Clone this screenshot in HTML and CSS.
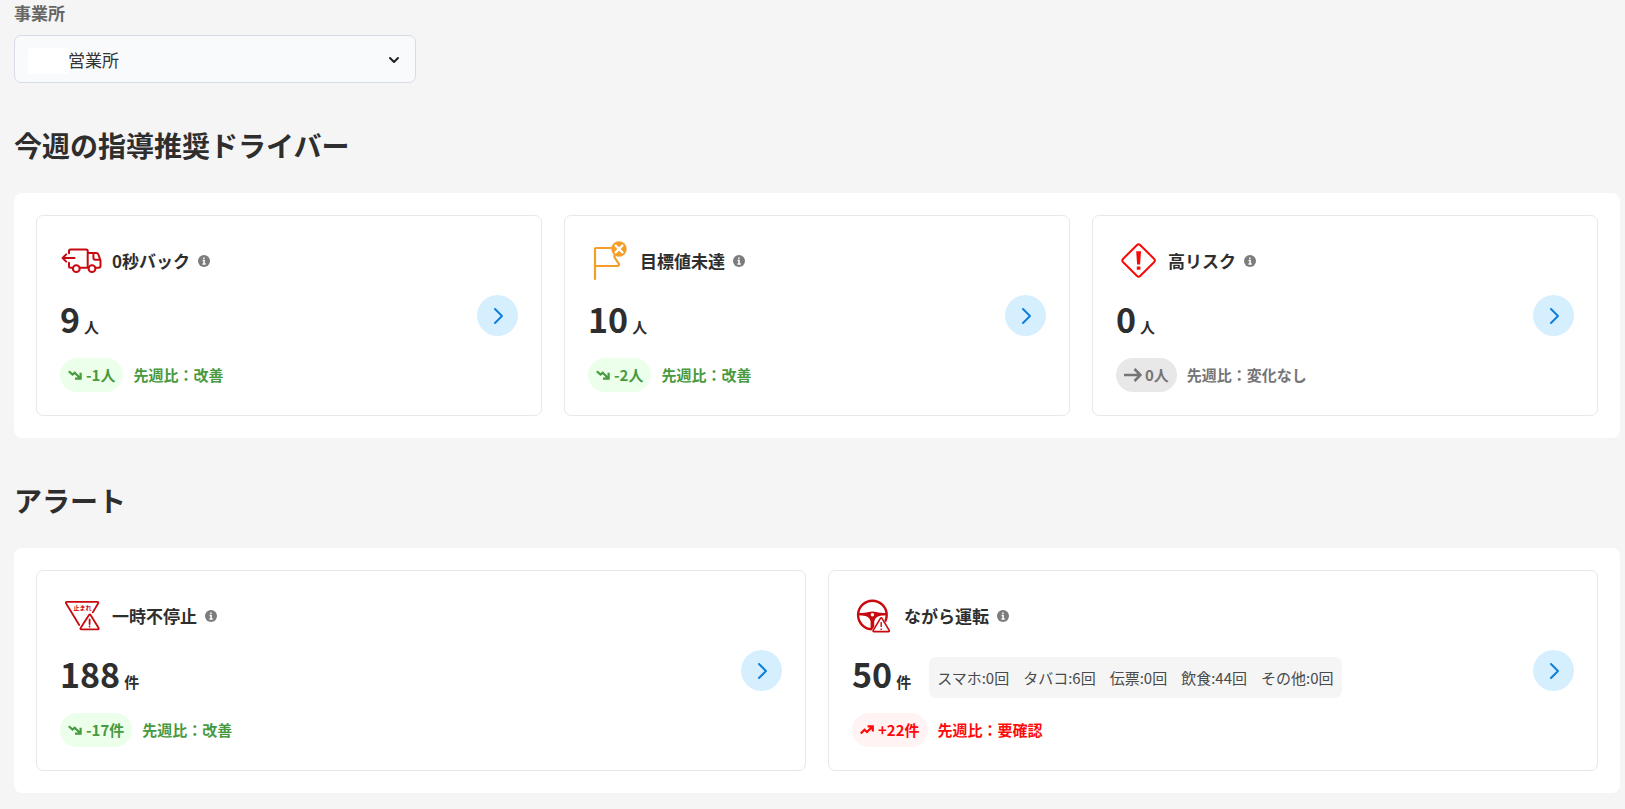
FILE: index.html
```html
<!DOCTYPE html>
<html lang="ja">
<head>
<meta charset="utf-8">
<title>今週の指導推奨ドライバー</title>
<link rel="stylesheet" href="styles.css">
</head>
<body>
<svg class="defs" aria-hidden="true">
  <symbol id="info" viewBox="0 0 12 12"><circle cx="6" cy="6" r="6" fill="#7c7c7c"/><path d="M5.900 2.400v1.700M4.600 5.400h1.500v3.700M4.500 9.100h3.200" fill="none" stroke="#fff" stroke-width="1.500"/></symbol>
  <symbol id="chevron" viewBox="0 0 18 18"><path d="M6 2l7 7-7 7" fill="none" stroke="#0e7fd8" stroke-width="2" stroke-linecap="round" stroke-linejoin="round"/></symbol>
  <symbol id="down" viewBox="0 0 14 10"><path d="M.8 1.200l3.700 3.400 2.200-1.900 5.100 5M12.600 2.800v5.800H7" fill="none" stroke="currentColor" stroke-width="2.200"/></symbol>
  <symbol id="up" viewBox="0 0 14 10"><path d="M.8 8.600l3.700-3.800 2.400 2.300 5.200-5M7.600 1.400h5.200v5.200" fill="none" stroke="currentColor" stroke-width="2.200"/></symbol>
  <symbol id="flat" viewBox="0 0 18 14"><path d="M0 7h16.500M10.500 1l6 6-6 6" fill="none" stroke="currentColor" stroke-width="2.600"/></symbol>
</svg>
<main class="page">
  <div class="field">
    <label class="field-label" for="office">事業所</label>
    <div class="select-wrap">
      <select class="select" id="office"><option>営業所</option></select>
      <span class="mask"></span>
      <svg class="caret" viewBox="0 0 12 8"><path d="M2 2l4 4 4-4" fill="none" stroke="#222" stroke-width="2" stroke-linecap="round" stroke-linejoin="round"/></svg>
    </div>
  </div>

  <section>
    <h2 class="heading">今週の指導推奨ドライバー</h2>
    <div class="panel three">
      <article class="card">
        <div class="body">
          <div class="title-row">
            <svg class="icon" viewBox="0 0 42 42" fill="none" stroke="#c80a10" stroke-width="2" stroke-linecap="round" stroke-linejoin="round"><path d="M14.500 18H2.600M6.200 14.400L2.600 18l3.600 3.600M9 13.200V11q0-1.500 1.500-1.500h15.600q1.600 0 1.600 1.600v16.600M9 22.800v3.400q0 1.500 1.500 1.500h2M20 27.700h8.400M27.700 13h8.400q1.800 0 2.400 1.800l2 5.700v5.200q0 2-2 2h-2.700M33.400 13.400v4.300q0 2 2 2h4.300"/><circle cx="16.300" cy="28.700" r="3.400"/><circle cx="32" cy="28.700" r="3.400"/></svg>
            <h3 class="title">0秒バック</h3>
            <button class="info" aria-label="説明"><svg viewBox="0 0 12 12"><use href="#info"/></svg></button>
          </div>
          <div class="count-row"><p class="count"><span class="num">9</span><span class="unit">人</span></p></div>
          <div class="trend good"><span class="badge"><svg class="t-icon" viewBox="0 0 14 10"><use href="#down"/></svg>-1人</span><span>先週比：改善</span></div>
        </div>
        <button class="go" aria-label="詳細"><svg class="go-icon" viewBox="0 0 18 18"><use href="#chevron"/></svg></button>
      </article>

      <article class="card">
        <div class="body">
          <div class="title-row">
            <svg class="icon" viewBox="0 0 42 42" fill="none" stroke="#f59d29" stroke-width="2.200" stroke-linecap="round" stroke-linejoin="round"><path d="M7 39V9q0-1 1-1h15M26.300 16l.6 2 3.800 5.600q1 2.400-2.200 2.400H7"/><circle cx="31" cy="9" r="7.700" fill="#f59d29" stroke="none"/><path d="M27.600 5.600l6.800 6.800M34.400 5.600l-6.800 6.800" stroke="#fff"/></svg>
            <h3 class="title">目標値未達</h3>
            <button class="info" aria-label="説明"><svg viewBox="0 0 12 12"><use href="#info"/></svg></button>
          </div>
          <div class="count-row"><p class="count"><span class="num">10</span><span class="unit">人</span></p></div>
          <div class="trend good"><span class="badge"><svg class="t-icon" viewBox="0 0 14 10"><use href="#down"/></svg>-2人</span><span>先週比：改善</span></div>
        </div>
        <button class="go" aria-label="詳細"><svg class="go-icon" viewBox="0 0 18 18"><use href="#chevron"/></svg></button>
      </article>

      <article class="card">
        <div class="body">
          <div class="title-row">
            <svg class="icon" viewBox="0 0 42 42"><path d="M20.800 5.200q1.800-1.800 3.600 0L38 18.700q1.800 1.800 0 3.600L24.400 35.800q-1.800 1.800-3.600 0L7.200 22.300q-1.800-1.800 0-3.600z" fill="none" stroke="#fb0808" stroke-width="2"/><path d="M20.200 11.200h4.800l-.9 13.400h-3zM20.800 26.600h3.600v3.200h-3.600z" fill="#fb0808"/></svg>
            <h3 class="title">高リスク</h3>
            <button class="info" aria-label="説明"><svg viewBox="0 0 12 12"><use href="#info"/></svg></button>
          </div>
          <div class="count-row"><p class="count"><span class="num">0</span><span class="unit">人</span></p></div>
          <div class="trend flat"><span class="badge"><svg class="t-icon wide" viewBox="0 0 18 14"><use href="#flat"/></svg>0人</span><span>先週比：変化なし</span></div>
        </div>
        <button class="go" aria-label="詳細"><svg class="go-icon" viewBox="0 0 18 18"><use href="#chevron"/></svg></button>
      </article>
    </div>
  </section>

  <section>
    <h2 class="heading">アラート</h2>
    <div class="panel two">
      <article class="card">
        <div class="body">
          <div class="title-row">
            <svg class="icon" viewBox="0 0 42 42" fill="none" stroke="#c80a10" stroke-width="1.800" stroke-linecap="round" stroke-linejoin="round"><path d="M19.200 30L6 8.200q-.6-1.400.8-1.400h30.600q1.400 0 .8 1.400L32.800 17.400M29 20q.8-1.200 1.600 0l8 13q.6 1.400-.8 1.400H21.400q-1.400 0-.8-1.400zM29.600 24.500v4.600M29.600 31.400v.2"/><text class="sign" x="22.400" y="15" text-anchor="middle">止まれ</text></svg>
            <h3 class="title">一時不停止</h3>
            <button class="info" aria-label="説明"><svg viewBox="0 0 12 12"><use href="#info"/></svg></button>
          </div>
          <div class="count-row"><p class="count"><span class="num">188</span><span class="unit">件</span></p></div>
          <div class="trend good"><span class="badge"><svg class="t-icon" viewBox="0 0 14 10"><use href="#down"/></svg>-17件</span><span>先週比：改善</span></div>
        </div>
        <button class="go" aria-label="詳細"><svg class="go-icon" viewBox="0 0 18 18"><use href="#chevron"/></svg></button>
      </article>

      <article class="card">
        <div class="body">
          <div class="title-row">
            <svg class="icon" viewBox="0 0 42 42"><circle cx="20.400" cy="20" r="14.300" fill="none" stroke="#c80a10" stroke-width="2.400"/><path d="M6.500 18q7 0 10-1 4-.8 8 0 3 1 10 1v2.200q-6.500 0-9.500 1.800-2.400 1.500-2.800 4.500v7h-3.600v-7q-.4-3-2.800-4.500-3-1.800-9.300-1.800z" fill="#c80a10"/><circle cx="20.400" cy="19.800" r="1.700" fill="#fff"/><path d="M29.200 20.200L41 39H17.500z" fill="#fff"/><path d="M28.400 23.400q.8-1.200 1.600 0l7.200 12q.6 1.200-.8 1.200H22q-1.400 0-.8-1.200z" fill="#fff" stroke="#c80a10" stroke-width="1.600"/><path d="M29.200 27v5M29.200 33.500v1.400" stroke="#c80a10" stroke-width="1.400"/></svg>
            <h3 class="title">ながら運転</h3>
            <button class="info" aria-label="説明"><svg viewBox="0 0 12 12"><use href="#info"/></svg></button>
          </div>
          <div class="count-row"><p class="count"><span class="num">50</span><span class="unit">件</span></p>
            <ul class="details"><li>スマホ:0回</li><li>タバコ:6回</li><li>伝票:0回</li><li>飲食:44回</li><li>その他:0回</li></ul>
          </div>
          <div class="trend bad"><span class="badge"><svg class="t-icon" viewBox="0 0 14 10"><use href="#up"/></svg>+22件</span><span>先週比：要確認</span></div>
        </div>
        <button class="go" aria-label="詳細"><svg class="go-icon" viewBox="0 0 18 18"><use href="#chevron"/></svg></button>
      </article>
    </div>
  </section>
</main>
</body>
</html>
```
FILE: styles.css
```css
* { box-sizing: border-box; }
body {
  margin: 0;
  background: #f5f5f5;
  color: #2e2e2e;
  font-family: "Noto Sans CJK JP", sans-serif;
}
h2, h3, p, ul { margin: 0; padding: 0; }
button { padding: 0; border: 0; background: none; cursor: pointer; }
svg { display: block; flex: none; }
.defs { position: absolute; width: 0; height: 0; }
.page { padding: 1px 5px 16px 14px; }

.field { max-width: 402px; }
.field-label {
  display: block;
  margin-bottom: 10px;
  color: #666;
  font-size: 17px;
  font-weight: 700;
  line-height: 24px;
}
.select-wrap { position: relative; }
.select {
  display: block;
  width: 100%;
  height: 48px;
  padding: 0 40px 0 53px;
  appearance: none;
  border: 1px solid #d8dce6;
  border-radius: 7px;
  background: #f9fafc;
  color: #333;
  font: 17px "Noto Sans CJK JP", sans-serif;
}
.mask {
  position: absolute;
  top: 13px;
  left: 14px;
  width: 41px;
  height: 26px;
  border-radius: 2px;
  background: #fff;
  pointer-events: none;
}
.caret {
  position: absolute;
  top: 21px;
  right: 16px;
  width: 12px;
  height: 8px;
  pointer-events: none;
}

.heading {
  margin: 42px 0 28px;
  font-size: 28px;
  font-weight: 700;
  line-height: 40px;
}
.panel {
  display: grid;
  gap: 22px;
  padding: 22px;
  border-radius: 8px;
  background: #fff;
}
.three { grid-template-columns: repeat(3, 1fr); }
.two { grid-template-columns: repeat(2, 1fr); }
.card {
  display: flex;
  align-items: center;
  padding: 23px;
  border: 1px solid #e8e8e8;
  border-radius: 7px;
}
.body { flex: 1; min-width: 0; }
.title-row { display: flex; align-items: center; height: 43px; }
.icon { width: 42px; height: 42px; margin-right: 10px; }
.sign {
  fill: #c80a10;
  stroke: none;
  font-size: 6px;
  font-weight: 700;
}
.title { font-size: 17px; font-weight: 700; line-height: 24px; }
.info { width: 12px; height: 12px; margin-left: 8px; }
.count-row {
  display: flex;
  align-items: center;
  gap: 18px;
  height: 41px;
  margin: 20px 0 15px;
}
.count { display: flex; align-items: baseline; gap: 4px; line-height: 44px; }
.num { font-size: 34px; font-weight: 700; }
.unit { font-size: 15px; font-weight: 700; }
.details {
  display: flex;
  gap: 14px;
  padding: 0 8px;
  border-radius: 7px;
  background: #f5f5f5;
  color: #4a4a4a;
  font-size: 15px;
  line-height: 41px;
  list-style: none;
  white-space: nowrap;
}
.trend {
  display: flex;
  align-items: center;
  gap: 10px;
  font-size: 15px;
  font-weight: 700;
  line-height: 34px;
}
.badge {
  display: flex;
  align-items: center;
  gap: 4px;
  padding: 0 8px;
  border-radius: 17px;
}
.t-icon { width: 14px; height: 10px; }
.t-icon.wide { width: 18px; height: 14px; }
.good { color: #479a40; }
.good .badge { background: #ecffea; }
.flat { color: #757575; }
.flat .badge { gap: 3px; background: #e8e8e8; }
.bad { color: #ff0a0a; }
.bad .badge { background: #fff3f3; }
.go {
  display: flex;
  align-items: center;
  justify-content: center;
  width: 41px;
  height: 41px;
  border-radius: 50%;
  background: #d6efff;
}
.go-icon { width: 18px; height: 18px; }
```
